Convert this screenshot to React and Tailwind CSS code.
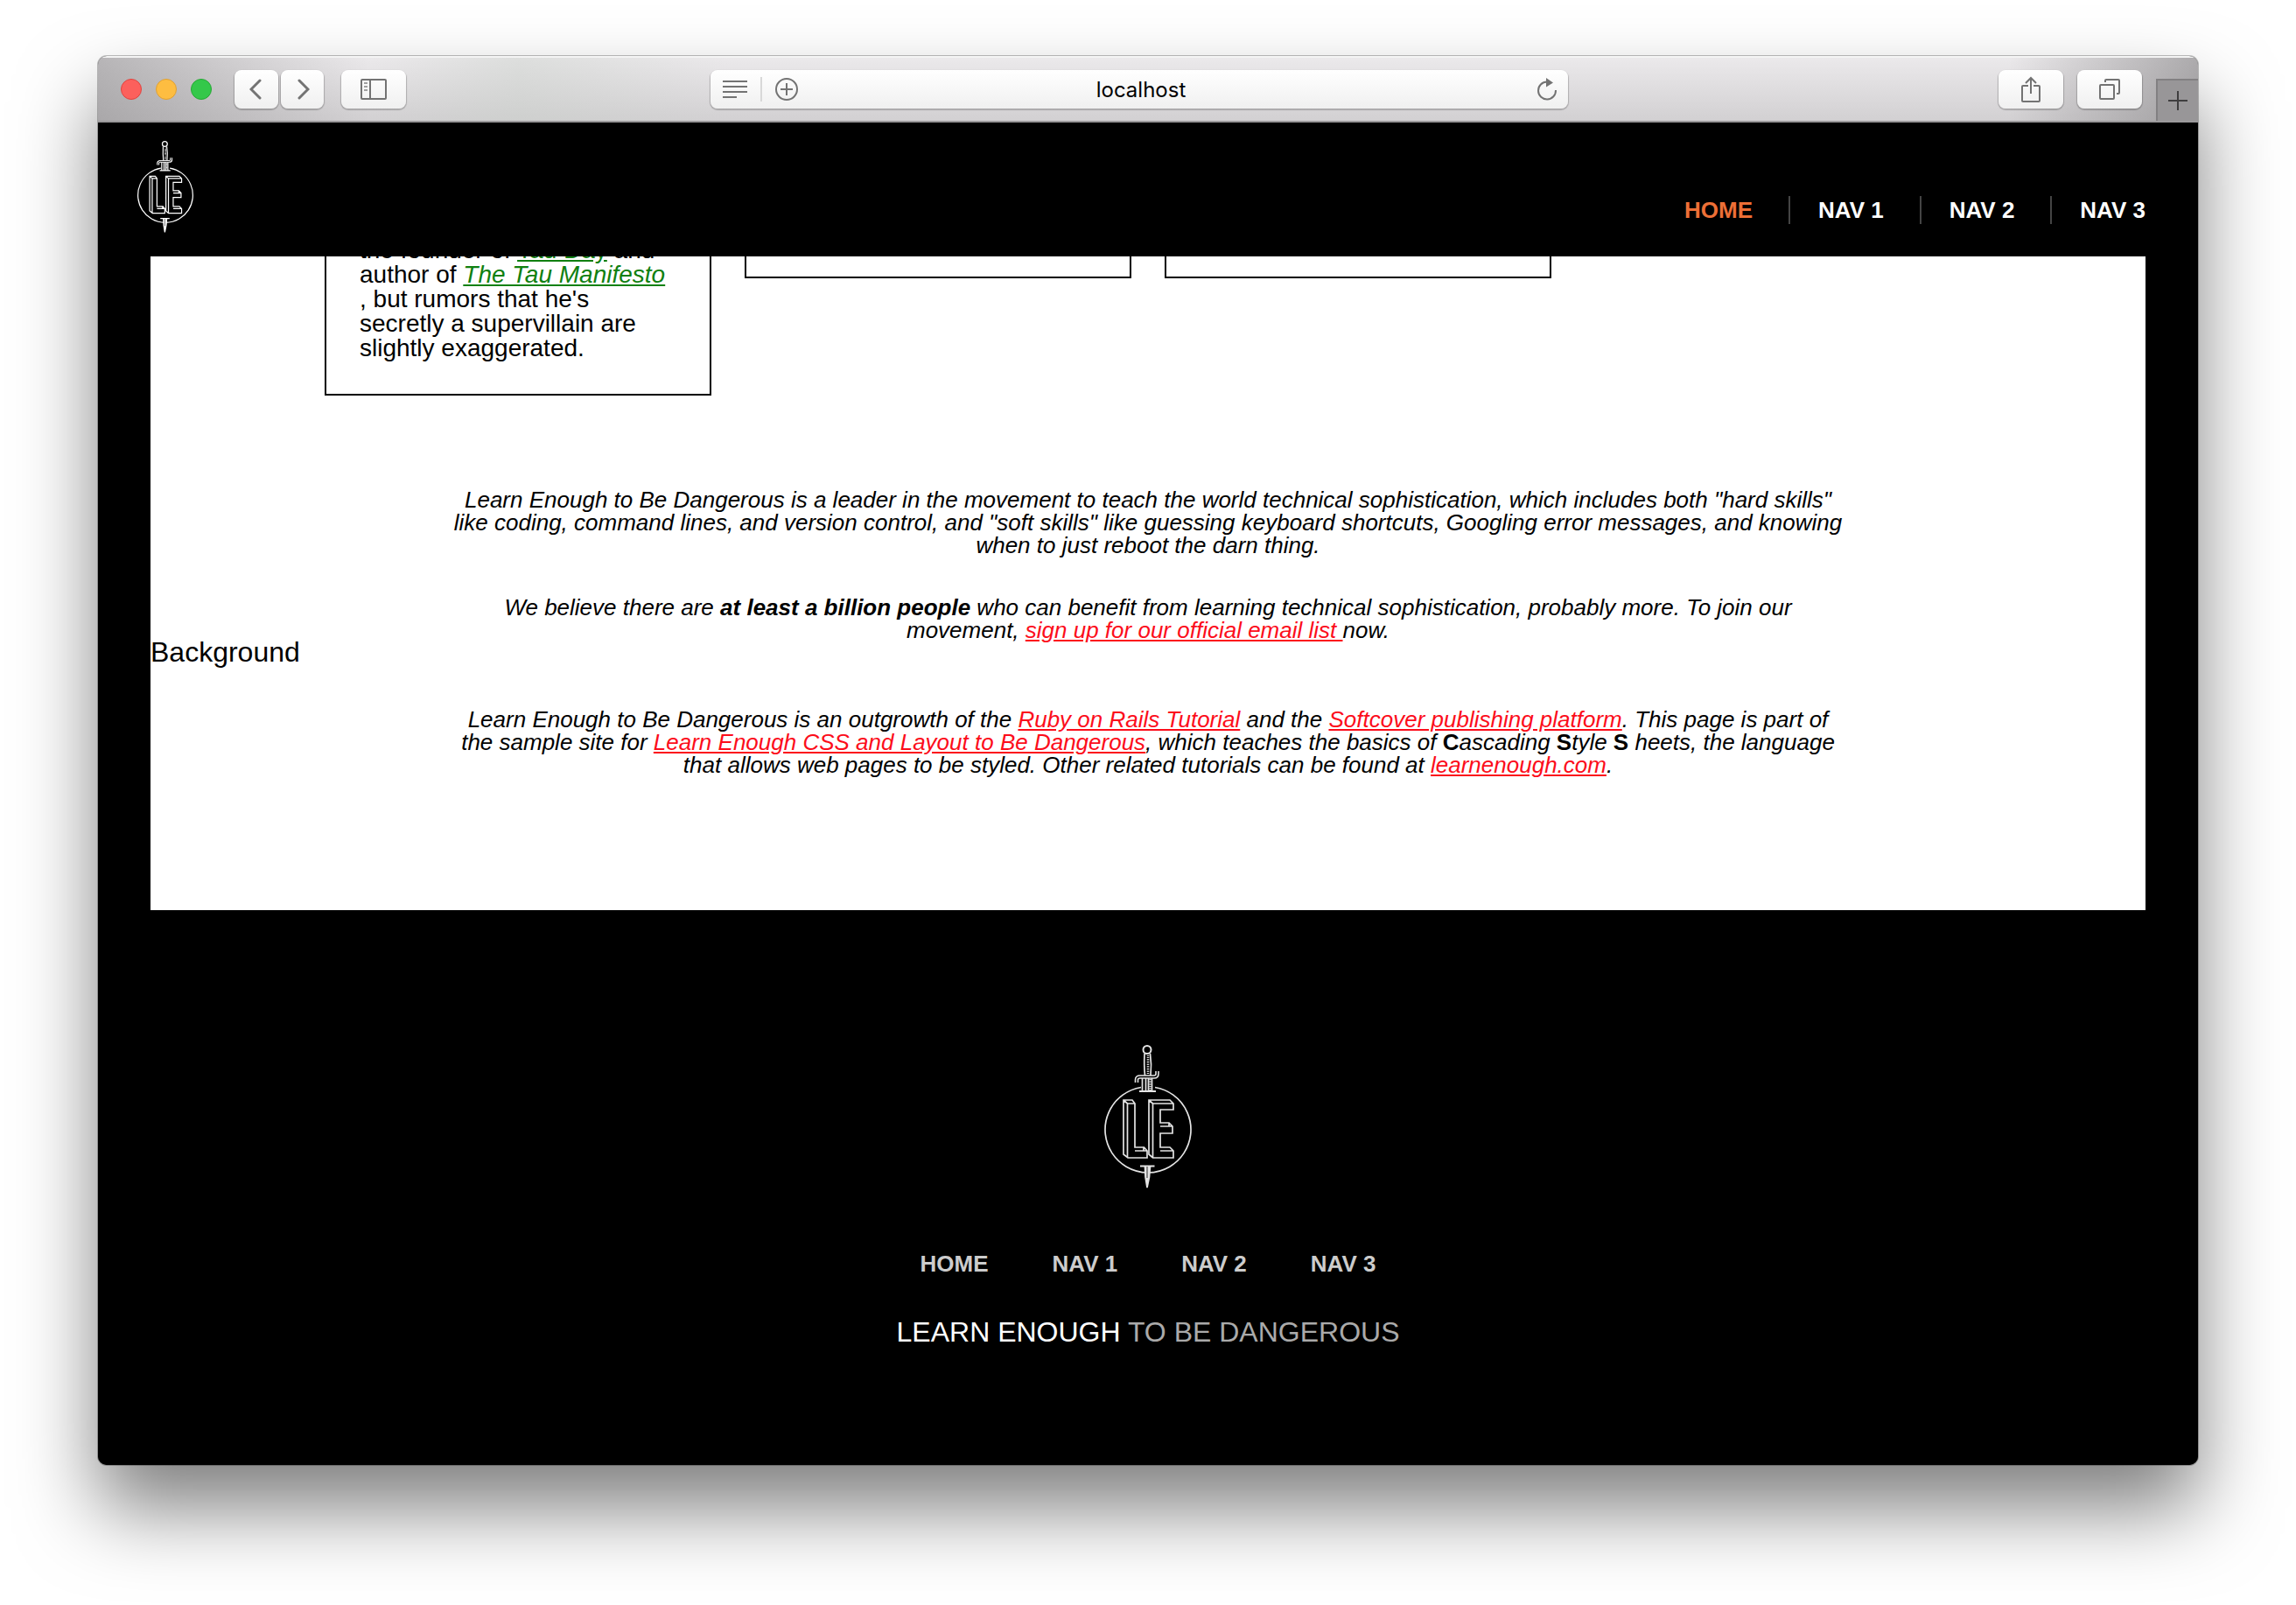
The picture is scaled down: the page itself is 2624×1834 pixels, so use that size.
import React from "react";

function Logo({ className, stroke }) {
  return (
    <svg viewBox="0 0 100 164" className={className} fill="none" stroke="currentColor" strokeWidth={stroke} role="img" aria-label="Learn Enough">
      <path d="M42 48.500A49 49 0 1 0 58 48.500" />
      <circle cx="49" cy="5.500" r="4.500" strokeWidth="2" />
      <path d="M46 10C45.500 20 45.500 26 46.500 35M52.500 10C54 20 54 26 53 35" />
      <path d="M50 12V34" strokeWidth="2.600" strokeDasharray="1 1" />
      <path d="M37 43V40Q37 36.500 41 36.500H57Q60.500 36.500 60.500 33V30" strokeWidth="4.600" />
      <path d="M37 43V40Q37 36.500 41 36.500H57Q60.500 36.500 60.500 33V30" stroke="#000" strokeWidth="1.400" />
      <path d="M43.500 38V53M47.500 38V53M50.500 38V53M54.500 38V53" />
      <path d="M52.500 39V52" strokeWidth="2.400" strokeDasharray="1 1" />
      <path d="M40 53H59M41 138.500H57.500" strokeWidth="1.800" />
      <path d="M46.500 139L47 151L49 163L51.500 151L52.500 139Z" fill="currentColor" />
      <path d="M49 139V152" stroke="#000" strokeWidth="0.800" />
      <path d="M22 63H32L35 67V117H45.500L49 121V129H27L22 125ZM26.500 67H35M22 63L26.500 67V129M35 121H49M45 117V121" />
      <path d="M51 63H75L79 67V74H64V89H74L78 93V101H64V117H75L79 121V129H55.500L51 125ZM55.500 67H79M51 63L55.500 67V129M64 93H78M64 121H79M74 89V93" />
    </svg>
  );
}

function ToolButton({ label, className, children }) {
  return (
    <button
      type="button"
      aria-label={label}
      className={`flex h-11 items-center justify-center rounded-lg bg-linear-to-b from-white to-[#f0f0f0] text-[#737373] shadow-[0_1px_1px_1px_rgba(0,0,0,0.2)] ${className}`}
    >
      {children}
    </button>
  );
}

function Toolbar() {
  return (
    <div className="flex h-[76px] items-center border-t-2 border-b-2 border-t-[#f4f4f4] border-b-[#9b999b] bg-[linear-gradient(to_right,rgba(120,118,120,0.45),rgba(200,198,200,0)_13%,rgba(200,206,200,0.4)_20%,rgba(200,198,200,0)_30%,rgba(200,198,200,0)_91%,rgba(110,108,110,0.5)),linear-gradient(to_bottom,#ebe9eb,#d2d0d2)]">
      <div className="flex w-[700px] items-center">
        <div className="ml-[26px] flex gap-4">
          <button type="button" aria-label="Close" className="size-6 rounded-full border border-[#e0443f] bg-[#fc605c]" />
          <button type="button" aria-label="Minimize" className="size-6 rounded-full border border-[#dfa034] bg-[#fdbd41]" />
          <button type="button" aria-label="Zoom" className="size-6 rounded-full border border-[#26a834] bg-[#34c84a]" />
        </div>
        <div className="ml-[26px] flex gap-[3px]">
          <ToolButton label="Back" className="w-[50px]">
            <svg className="h-6 w-4" viewBox="0 0 16 24" fill="none" stroke="currentColor" strokeWidth="3" strokeLinecap="round"><path d="M12 2 2 12l10 10" /></svg>
          </ToolButton>
          <ToolButton label="Forward" className="w-[49px]">
            <svg className="h-6 w-4" viewBox="0 0 16 24" fill="none" stroke="currentColor" strokeWidth="3" strokeLinecap="round"><path d="M4 2l10 10L4 22" /></svg>
          </ToolButton>
        </div>
        <ToolButton label="Sidebar" className="ml-5 w-[74px]">
          <svg className="h-6 w-[30px]" viewBox="0 0 30 24" fill="none" stroke="currentColor" strokeWidth="2">
            <rect x="1" y="1" width="28" height="22" rx="1" />
            <path d="M11 1v22" />
            <path d="M4 5h4M4 9h4M4 13h4" stroke="#a0a0a0" />
          </svg>
        </ToolButton>
      </div>
      <div className="flex h-11 w-[980px] items-center rounded-lg bg-linear-to-b from-white to-[#f0f0f0] pr-3 pl-[14px] text-[#737373] shadow-[0_1px_1px_1px_rgba(0,0,0,0.2)]">
        <button type="button" aria-label="Reader">
          <svg className="h-5 w-7" viewBox="0 0 28 20" stroke="currentColor" strokeWidth="2"><path d="M0 1h28M0 7h28M0 13h28M0 19h16" /></svg>
        </button>
        <div className="mx-[15px] h-7 w-0.5 bg-[#d8d8d8]" />
        <button type="button" aria-label="Add bookmark">
          <svg className="size-[26px]" viewBox="0 0 26 26" fill="none" stroke="currentColor" strokeWidth="2"><circle cx="13" cy="13" r="12" /><path d="M13 6v14M6 13h14" /></svg>
        </button>
        <input aria-label="Address" defaultValue="localhost" className="min-w-0 flex-1 bg-transparent pt-0.5 pr-[60px] text-center font-[Inter,sans-serif] text-[24px] leading-8 text-black outline-none" />
        <button type="button" aria-label="Reload">
          <svg className="h-[26px] w-6" viewBox="0 0 24 26" fill="none" stroke="currentColor" strokeWidth="2">
            <path d="M12 4.500A10 10 0 1 0 22 14" />
            <path d="M11 0v10.500l8-5z" fill="currentColor" stroke="none" />
          </svg>
        </button>
      </div>
      <div className="flex flex-1 items-center justify-end gap-4 self-stretch">
        <ToolButton label="Share" className="w-[74px]">
          <svg className="h-[30px] w-[22px]" viewBox="0 0 22 30" fill="none" stroke="currentColor" strokeWidth="2">
            <path d="M8 11H2q-1 0-1 1v16q0 1 1 1h18q1 0 1-1V12q0-1-1-1h-6" />
            <path d="M11 20V2M5 8l6-6 6 6" />
          </svg>
        </ToolButton>
        <ToolButton label="Show tabs" className="w-[74px]">
          <svg className="h-6 w-6" viewBox="0 0 24 24" fill="none" stroke="currentColor" strokeWidth="2">
            <rect x="1" y="7" width="16" height="16" rx="1" />
            <path d="M7 4V2q0-1 1-1h14q1 0 1 1v14q0 1-1 1h-2" />
          </svg>
        </ToolButton>
        <button type="button" aria-label="New tab" className="flex h-12 w-12 items-center justify-center self-end border-t-2 border-l-2 border-[#828082] bg-[#989698] text-[#3f3e3f]">
          <svg className="size-[22px]" viewBox="0 0 22 22" stroke="currentColor" strokeWidth="2"><path d="M11 0v22M0 11h22" /></svg>
        </button>
      </div>
    </div>
  );
}

function Header() {
  return (
    <header className="flex h-[153px] items-start justify-between bg-black pr-[60px] pl-[45px]">
      <a href="#home" className="mt-5 text-white"><Logo className="h-[107px] w-16" stroke="1.900" /></a>
      <nav className="mt-[84px] flex items-center text-[26px] leading-8 font-bold text-white">
        <a href="#home" className="pr-[41px] text-[#ed6f36]">HOME</a>
        <a href="#nav1" className="border-l-2 border-[#444] pr-[41px] pl-8">NAV 1</a>
        <a href="#nav2" className="border-l-2 border-[#444] pr-[41px] pl-8">NAV 2</a>
        <a href="#nav3" className="border-l-2 border-[#444] pl-8">NAV 3</a>
      </nav>
    </header>
  );
}

function RedLink({ href, children }) {
  return <a href={href} className="text-[#fc0d1b] underline">{children}</a>;
}

function Content() {
  return (
    <main className="mx-[60px] overflow-hidden bg-white pb-[108px]">
      <div className="-mt-[23px] flex items-start gap-[38px] pl-[199px]">
        <div className="w-[442px] border-2 border-black px-[38px] pb-[38px] text-[28px] leading-7">
          <p>
            the founder of <a href="#tau-day" className="text-[#108010] underline">Tau Day</a> and author of{" "}
            <a href="#tau" className="text-[#108010] italic underline">The Tau Manifesto</a> , but rumors that he's secretly a supervillain are slightly exaggerated.
          </p>
        </div>
        <div className="h-12 w-[442px] border-2 border-black" />
        <div className="h-12 w-[442px] border-2 border-black" />
      </div>
      <div className="mt-[106px] grid grid-cols-[1fr_minmax(0,1600px)_1fr] items-center">
        <h2 className="text-[32px] leading-8">Background</h2>
        <div className="pb-[45px] text-center text-[26px] leading-[26px] italic">
          <p>
            Learn Enough to Be Dangerous is a leader in the movement to teach the world technical sophistication, which includes both "hard skills" like coding, command lines, and version control, and "soft skills" like guessing keyboard shortcuts, Googling error messages, and knowing when to just reboot the darn thing.
          </p>
          <p className="mt-[45px] px-10">
            We believe there are <strong>at least a billion people</strong> who can benefit from learning technical sophistication, probably more. To join our movement, <RedLink href="#signup">sign up for our official email list </RedLink>now.
          </p>
          <p className="mt-[76px] px-2">
            Learn Enough to Be Dangerous is an outgrowth of the <RedLink href="#rails">Ruby on Rails Tutorial</RedLink> and the <RedLink href="#softcover">Softcover publishing platform</RedLink>. This page is part of the sample site for <RedLink href="#css">Learn Enough CSS and Layout to Be Dangerous</RedLink>, which teaches the basics of <strong className="not-italic">C</strong>ascading <strong className="not-italic">S</strong>tyle <strong className="not-italic">S</strong> heets, the language that allows web pages to be styled. Other related tutorials can be found at <RedLink href="#learnenough">learnenough.com</RedLink>.
          </p>
        </div>
      </div>
    </main>
  );
}

function Footer() {
  return (
    <footer className="flex flex-col items-center bg-black pt-[154px] pb-[136px]">
      <a href="#home" className="text-[#e4e4e4]"><Logo className="h-[164px] w-[100px]" stroke="1.700" /></a>
      <nav className="mt-[70px] flex gap-[73px] text-[26px] leading-8 font-bold text-[#ccc]">
        <a href="#home">HOME</a>
        <a href="#nav1">NAV 1</a>
        <a href="#nav2">NAV 2</a>
        <a href="#nav3">NAV 3</a>
      </nav>
      <p className="mt-[46px] text-[32px] leading-8 text-[#aaa]">
        <a href="#learnenough" className="text-white">LEARN ENOUGH</a> TO BE DANGEROUS
      </p>
    </footer>
  );
}

export default function App() {
  return (
    <div className="min-h-screen overflow-hidden bg-white px-28 pt-16 pb-40 font-['Liberation_Sans',Arial,sans-serif] text-black">
      <div className="rounded-[10px] shadow-[0_0_0_1px_rgba(0,0,0,0.25),0_50px_90px_rgba(0,0,0,0.5)]">
        <div className="overflow-hidden rounded-[10px] bg-black">
          <Toolbar />
          <Header />
          <Content />
          <Footer />
        </div>
      </div>
    </div>
  );
}
